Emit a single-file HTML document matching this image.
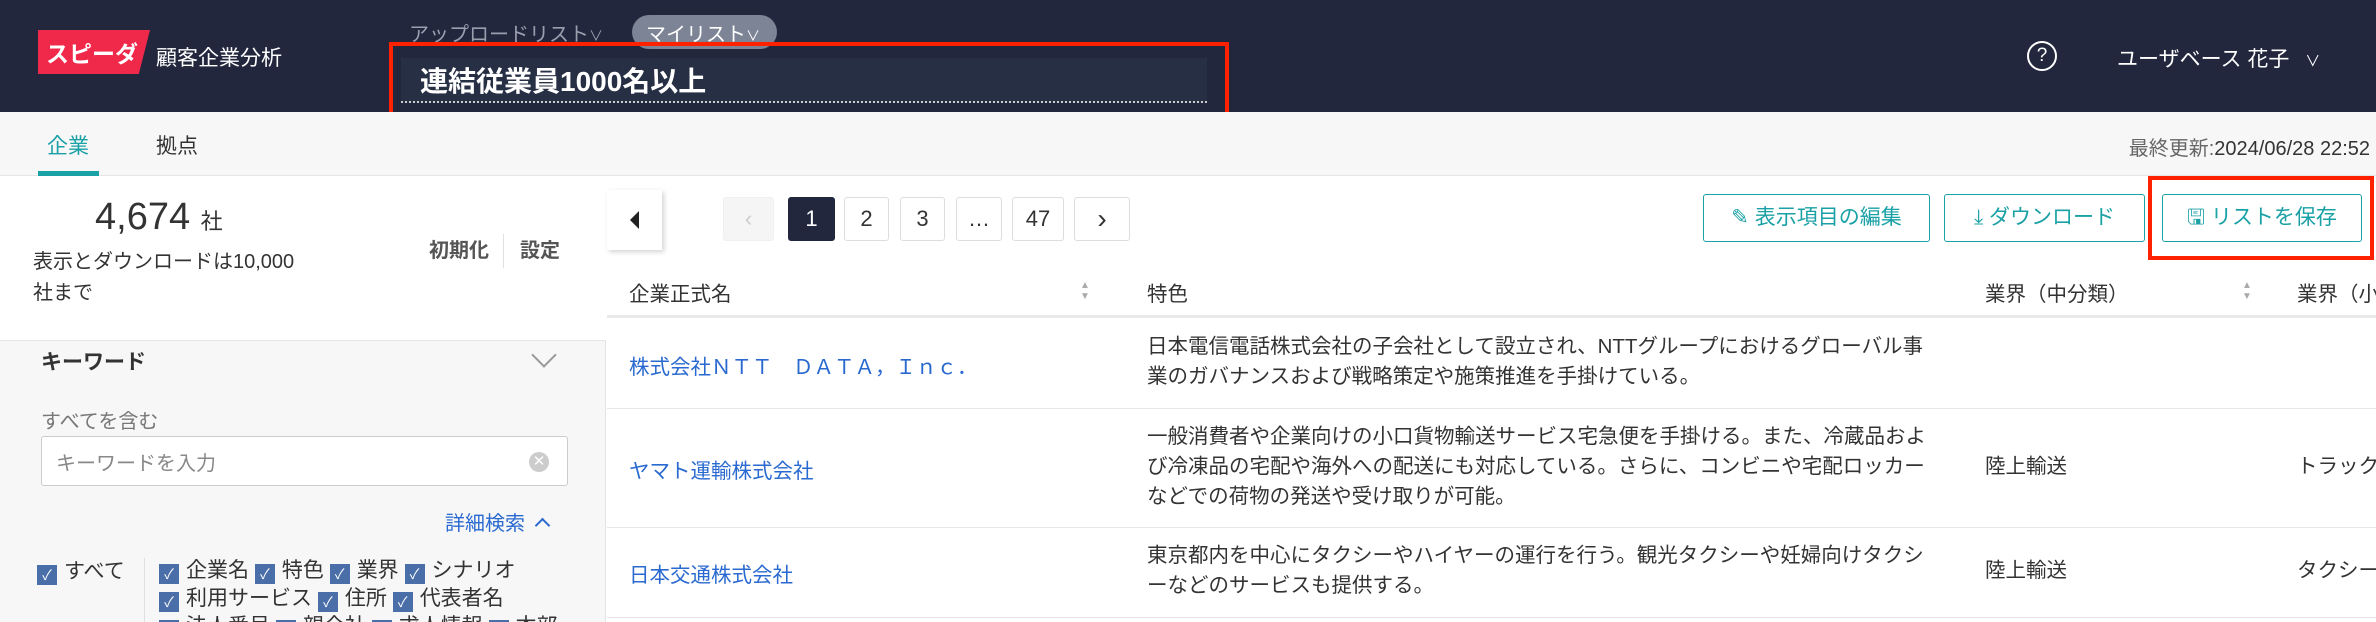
<!DOCTYPE html>
<html style="width:2376px;height:622px;overflow:hidden"><head><meta charset="utf-8">
<style>
*{margin:0;padding:0;box-sizing:border-box}
body{width:2376px;height:622px;overflow:hidden;background:#fff;font-family:"Liberation Sans","Noto Sans CJK JP",sans-serif;color:#333;position:relative}
.a{position:absolute;white-space:nowrap}
.hdr{left:0;top:0;width:2376px;height:112px;background:#22273e}
.cb{display:inline-block;width:20px;height:20px;background:#4a6ea8;color:#fff;font-size:14px;line-height:20px;text-align:center;vertical-align:-2px;margin-right:7px}
.pg{top:197px;height:44px;border:1px solid #ddd;border-radius:3px;background:#fff;font-size:22px;line-height:42px;text-align:center;color:#333}
.btn{top:194px;height:48px;border:1.5px solid #1aa1a6;border-radius:3px;color:#1aa1a6;font-size:21px;line-height:45px;text-align:center}
.td{font-size:20.5px;line-height:30px;color:#333}
.lk{color:#2a6ad0;font-size:20.5px}
</style></head><body>
<div class="a hdr"></div>
<div class="a" style="left:38px;top:30px;width:112px;height:44px;background:#f0284a;clip-path:polygon(0 0,100% 0,90% 100%,0 100%)"></div>
<div class="a" style="left:46px;top:35px;color:#fff;font-weight:bold;font-size:23px">スピーダ</div>
<div class="a" style="left:156px;top:42px;color:#fff;font-size:21px">顧客企業分析</div>
<div class="a" style="left:409px;top:18px;color:#9a9fae;font-size:20px">アップロードリスト<span style="font-size:14px">∨</span></div>
<div class="a" style="left:632px;top:15px;width:145px;height:34px;background:#7d8496;border-radius:17px"></div>
<div class="a" style="left:646px;top:18px;color:#fff;font-size:20px">マイリスト<span style="font-size:14px">∨</span></div>
<div class="a" style="left:401px;top:58px;width:806px;height:45px;background:#262f44;border-bottom:2px dotted #ccc"></div>
<div class="a" style="left:420px;top:60px;color:#fff;font-size:28px;font-weight:bold">連結従業員1000名以上</div>
<div class="a" style="left:389px;top:42px;width:840px;height:87px;border:4px solid #ff2200"></div>
<div class="a" style="left:2027px;top:41px;width:30px;height:30px;border:2px solid #fff;border-radius:50%;color:#fff;font-size:19px;line-height:26px;text-align:center">?</div>
<div class="a" style="left:2117px;top:43px;color:#fff;font-size:21px">ユーザベース 花子 <span style="font-size:15px;margin-left:10px">∨</span></div>
<div class="a" style="left:0;top:112px;width:2376px;height:64px;background:#f7f7f7;border-bottom:1px solid #e6e6e6"></div>
<div class="a" style="left:47px;top:130px;color:#1aa1a6;font-size:21px">企業</div>
<div class="a" style="left:38px;top:171px;width:61px;height:5px;background:#1aa1a6"></div>
<div class="a" style="left:156px;top:130px;color:#333;font-size:21px">拠点</div>
<div class="a" style="right:6px;top:132px;color:#666;font-size:20px">最終更新:<span style="color:#333">2024/06/28 22:52</span></div>
<div class="a" style="left:0;top:176px;width:606px;height:446px;background:#f7f7f7;border-right:1px solid #e4e4e4"></div>
<div class="a" style="left:0;top:176px;width:606px;height:165px;background:#fff;border-bottom:1px solid #e6e6e6"></div>
<div class="a" style="left:95px;top:196px;font-size:38px;color:#333">4,674 <span style="font-size:22px">社</span></div>
<div class="a" style="left:33px;top:247px;font-size:20px;line-height:31px;color:#333">表示とダウンロードは10,000<br>社まで</div>
<div class="a" style="left:429px;top:234px;font-size:20px;font-weight:bold;color:#555">初期化</div>
<div class="a" style="left:503px;top:234px;width:1px;height:34px;background:#e0e0e0"></div>
<div class="a" style="left:520px;top:234px;font-size:20px;font-weight:bold;color:#555">設定</div>
<div class="a" style="left:41px;top:346px;font-size:21px;font-weight:bold;color:#333">キーワード</div>
<div class="a" style="left:535px;top:346px;width:18px;height:18px;border-right:2px solid #999;border-bottom:2px solid #999;transform:rotate(45deg)"></div>
<div class="a" style="left:41px;top:405px;font-size:20px;color:#777">すべてを含む</div>
<div class="a" style="left:41px;top:436px;width:527px;height:50px;background:#fff;border:1px solid #ccc;border-radius:3px"></div>
<div class="a" style="left:56px;top:447px;font-size:20px;color:#888">キーワードを入力</div>
<div class="a" style="left:529px;top:452px;width:20px;height:20px;border-radius:50%;background:#ccc;color:#fff;font-size:15px;line-height:20px;text-align:center">✕</div>
<div class="a" style="left:445px;top:507px;font-size:20px;color:#2a6ad0">詳細検索 <span style="display:inline-block;width:11px;height:11px;border-left:2px solid #2a6ad0;border-top:2px solid #2a6ad0;transform:rotate(45deg);margin-left:6px;vertical-align:-1px"></span></div>
<div class="a" style="left:37px;top:555px;font-size:21px"><span class="cb">✓</span>すべて</div>
<div class="a" style="left:144px;top:558px;width:1px;height:70px;background:#e0e0e0"></div>
<div class="a" style="left:159px;top:557px;font-size:21px;line-height:28px"><span class="cb">✓</span>企業名 <span class="cb">✓</span>特色 <span class="cb">✓</span>業界 <span class="cb">✓</span>シナリオ<br><span class="cb">✓</span>利用サービス <span class="cb">✓</span>住所 <span class="cb">✓</span>代表者名<br><span class="cb">✓</span>法人番号 <span class="cb">✓</span>親会社 <span class="cb">✓</span>求人情報 <span class="cb">✓</span>本部</div>
<div class="a" style="left:607px;top:190px;width:55px;height:60px;background:#fff;box-shadow:2px 2px 5px rgba(0,0,0,.18)"></div>
<div class="a" style="left:630px;top:211px;width:0;height:0;border-top:9px solid transparent;border-bottom:9px solid transparent;border-right:9px solid #222"></div>
<div class="a pg" style="left:723px;width:51px;background:#f5f5f5;border-color:#f0f0f0;color:#ccc">&lsaquo;</div>
<div class="a pg" style="left:788px;width:47px;background:#22273e;border-color:#22273e;color:#fff">1</div>
<div class="a pg" style="left:844px;width:45px">2</div>
<div class="a pg" style="left:900px;width:45px">3</div>
<div class="a pg" style="left:956px;width:46px">…</div>
<div class="a pg" style="left:1012px;width:52px">47</div>
<div class="a pg" style="left:1074px;width:56px;font-size:28px">&rsaquo;</div>
<div class="a btn" style="left:1703px;width:227px">✎ 表示項目の編集</div>
<div class="a btn" style="left:1944px;width:201px">⤓ ダウンロード</div>
<div class="a btn" style="left:2162px;width:200px">🖫 リストを保存</div>
<div class="a" style="left:2148px;top:176px;width:226px;height:84px;border:4px solid #ff2200"></div>
<div class="a" style="left:607px;top:315px;width:1769px;height:3px;background:#e9e9e9"></div>
<div class="a" style="left:629px;top:277px;font-size:20.5px">企業正式名</div>
<div class="a" style="left:1080px;top:280px;font-size:10px;line-height:11px;color:#aaa">▲<br>▼</div>
<div class="a" style="left:1147px;top:277px;font-size:20.5px">特色</div>
<div class="a" style="left:1985px;top:277px;font-size:20.5px">業界（中分類）</div>
<div class="a" style="left:2242px;top:280px;font-size:10px;line-height:11px;color:#aaa">▲<br>▼</div>
<div class="a" style="left:2297px;top:277px;font-size:20.5px">業界（小分類）</div>
<div class="a" style="left:607px;top:408px;width:1769px;height:1px;background:#e6e6e6"></div>
<div class="a" style="left:607px;top:527px;width:1769px;height:1px;background:#e6e6e6"></div>
<div class="a" style="left:607px;top:617px;width:1769px;height:1px;background:#e6e6e6"></div>
<div class="a lk" style="left:629px;top:350px;letter-spacing:0px">株式会社ＮＴＴ　ＤＡＴＡ，Ｉｎｃ．</div>
<div class="a td" style="left:1147px;top:332px">日本電信電話株式会社の子会社として設立され、NTTグループにおけるグローバル事<br>業のガバナンスおよび戦略策定や施策推進を手掛けている。</div>
<div class="a lk" style="left:629px;top:454px">ヤマト運輸株式会社</div>
<div class="a td" style="left:1147px;top:422px">一般消費者や企業向けの小口貨物輸送サービス宅急便を手掛ける。また、冷蔵品およ<br>び冷凍品の宅配や海外への配送にも対応している。さらに、コンビニや宅配ロッカー<br>などでの荷物の発送や受け取りが可能。</div>
<div class="a td" style="left:1985px;top:452px">陸上輸送</div>
<div class="a td" style="left:2297px;top:452px">トラック輸送</div>
<div class="a lk" style="left:629px;top:558px">日本交通株式会社</div>
<div class="a td" style="left:1147px;top:541px">東京都内を中心にタクシーやハイヤーの運行を行う。観光タクシーや妊婦向けタクシ<br>ーなどのサービスも提供する。</div>
<div class="a td" style="left:1985px;top:556px">陸上輸送</div>
<div class="a td" style="left:2297px;top:556px">タクシー</div>
</body></html>
